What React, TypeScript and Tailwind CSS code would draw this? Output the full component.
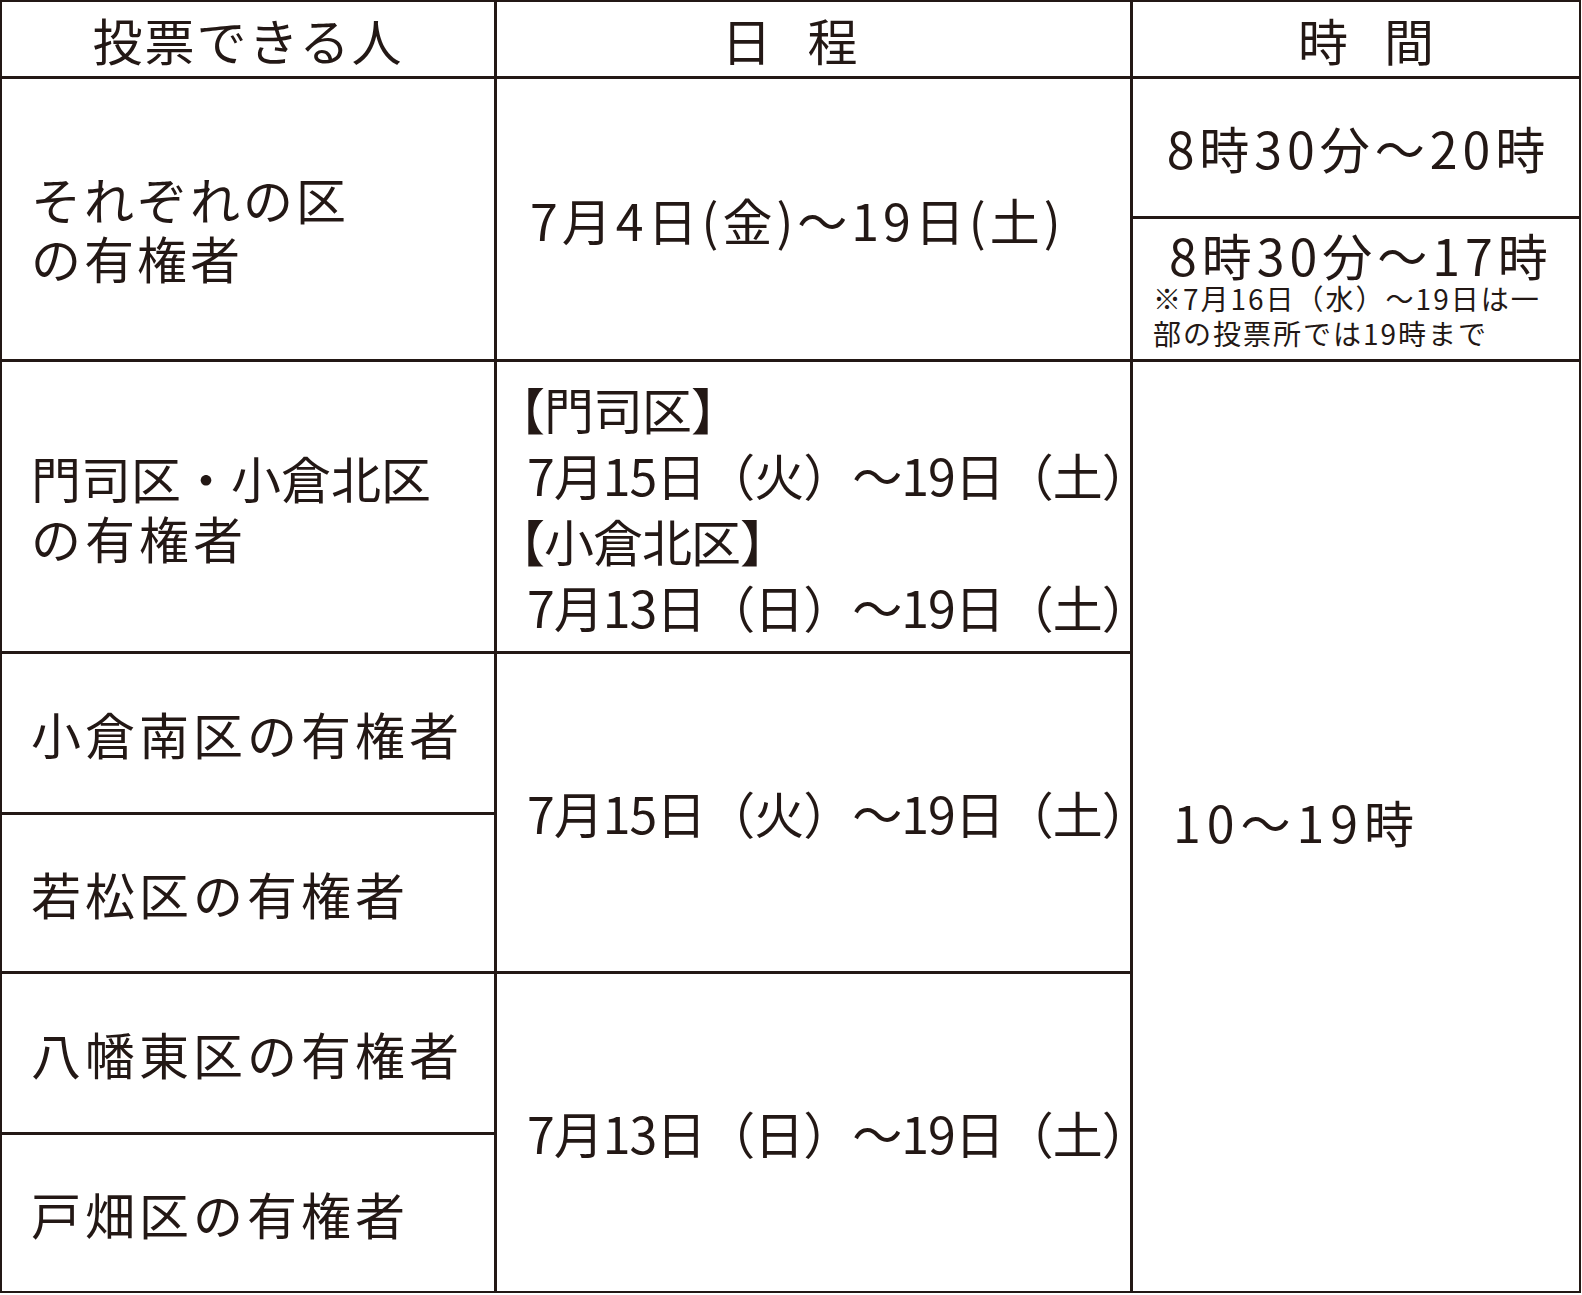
const font = { fontFamily: '"Noto Sans CJK JP", "Noto Sans", sans-serif' }

function Cell({ className = "", children }: { className?: string; children: React.ReactNode }) {
  return <div className={`bg-white flex ${className}`}>{children}</div>
}

export default function App() {
  return (
    <div className="w-[1581px] bg-white text-[#231815]" style={font}>
      <div className="grid grid-cols-[492px_633px_446px] grid-rows-[74px_137px_140px_289px_158px_156px_158px_156px] gap-[3px] p-[2px] bg-[#231815]">
        {/* header */}
        <Cell className="col-start-1 row-start-1 bg-[#e3f2fa] items-center justify-center text-[50px] tracking-[2px]">
          投票できる人
        </Cell>
        <Cell className="col-start-2 row-start-1 bg-[#e3f2fa] items-center justify-center pr-[48px] text-[50px]">
          <span className="tracking-[36px] -mr-[36px]">日程</span>
        </Cell>
        <Cell className="col-start-3 row-start-1 bg-[#e3f2fa] items-center justify-center pl-[20px] text-[50px]">
          <span className="tracking-[36px] -mr-[36px]">時間</span>
        </Cell>

        {/* それぞれの区 */}
        <Cell className="col-start-1 row-start-2 row-span-2 items-center pl-[29px] pt-[18px] text-[50px] leading-[59px] tracking-[3px]">
          <p>
            それぞれの区
            <br />
            の有権者
          </p>
        </Cell>
        <Cell className="col-start-2 row-start-2 row-span-2 items-center pl-[33px] text-[50px] tracking-[4px]">
          7月4日(金)～19日(土)
        </Cell>
        <Cell className="col-start-3 row-start-2 items-center justify-center text-[50px]">
          <span className="tracking-[5px] -mr-[5px]">8時30分～20時</span>
        </Cell>
        <Cell className="col-start-3 row-start-3 flex-col pl-[20px] pt-[8px]">
          <span className="pl-[16px] text-[50px] leading-[54px] tracking-[5px]">8時30分～17時</span>
          <span className="text-[28px] leading-[35px] tracking-[2px]">
            ※7月16日（水）～19日は一
            <br />
            部の投票所では19時まで
          </span>
        </Cell>

        {/* 門司区・小倉北区 */}
        <Cell className="col-start-1 row-start-4 items-center pl-[29px] text-[50px] leading-[60px]">
          <p>
            門司区・小倉北区
            <br />
            <span className="tracking-[4px]">の有権者</span>
          </p>
        </Cell>
        <Cell className="col-start-2 row-start-4 flex-col justify-center pl-[30px] text-[50px] leading-[66px] tracking-[-1px]">
          <span className="-ml-[32px]">【門司区】</span>
          <span>7月15日（火）～19日（土）</span>
          <span className="-ml-[32px]">【小倉北区】</span>
          <span>7月13日（日）～19日（土）</span>
        </Cell>
        <Cell className="col-start-3 row-start-4 row-span-5 items-center pl-[40px] pb-[10px] text-[50px] tracking-[6px]">
          10～19時
        </Cell>

        {/* 各区 */}
        <Cell className="col-start-1 row-start-5 items-center pl-[29px] text-[50px] tracking-[4px]">
          小倉南区の有権者
        </Cell>
        <Cell className="col-start-2 row-start-5 row-span-2 items-center pl-[30px] text-[50px] tracking-[-1px]">
          7月15日（火）～19日（土）
        </Cell>
        <Cell className="col-start-1 row-start-6 items-center pl-[29px] text-[50px] tracking-[4px]">
          若松区の有権者
        </Cell>
        <Cell className="col-start-1 row-start-7 items-center pl-[29px] text-[50px] tracking-[4px]">
          八幡東区の有権者
        </Cell>
        <Cell className="col-start-2 row-start-7 row-span-2 items-center pl-[30px] text-[50px] tracking-[-1px]">
          7月13日（日）～19日（土）
        </Cell>
        <Cell className="col-start-1 row-start-8 items-center pl-[29px] text-[50px] tracking-[4px]">
          戸畑区の有権者
        </Cell>
      </div>
    </div>
  )
}
